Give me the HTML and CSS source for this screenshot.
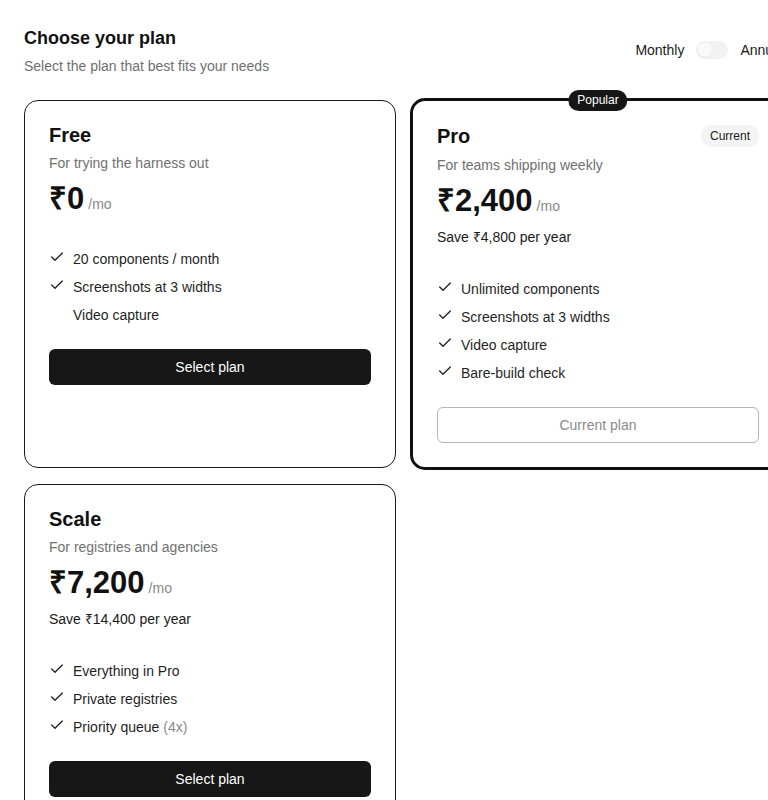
FILE: index.html
```html
<!DOCTYPE html>
<html lang="en">
<head>
<meta charset="utf-8">
<title>Choose your plan</title>
<link rel="stylesheet" href="styles.css">
</head>
<body>
<div class="page">
  <header class="head">
    <div>
      <h1 class="head-title">Choose your plan</h1>
      <p class="head-sub">Select the plan that best fits your needs</p>
    </div>
    <div class="billing">
      <span>Monthly</span>
      <span class="switch"><span class="knob"></span></span>
      <span>Annual</span>
    </div>
  </header>

  <div class="plans">
    <section class="card">
      <div class="card-top"><h2 class="plan-name">Free</h2></div>
      <p class="plan-desc">For trying the harness out</p>
      <div class="price"><span class="amount">₹0</span> <span class="per">/mo</span></div>
      <ul class="features">
        <li><svg class="check" viewBox="0 0 24 24"><polyline points="20 6 9 17 4 12"/></svg><span>20 components / month</span></li>
        <li><svg class="check" viewBox="0 0 24 24"><polyline points="20 6 9 17 4 12"/></svg><span>Screenshots at 3 widths</span></li>
        <li><span class="nocheck"></span><span>Video capture</span></li>
      </ul>
      <button class="btn btn-primary">Select plan</button>
    </section>

    <section class="card card-pro">
      <span class="popular">Popular</span>
      <div class="card-top"><h2 class="plan-name">Pro</h2><span class="current">Current</span></div>
      <p class="plan-desc">For teams shipping weekly</p>
      <div class="price"><span class="amount">₹2,400</span> <span class="per">/mo</span></div>
      <p class="save">Save ₹4,800 per year</p>
      <ul class="features">
        <li><svg class="check" viewBox="0 0 24 24"><polyline points="20 6 9 17 4 12"/></svg><span>Unlimited components</span></li>
        <li><svg class="check" viewBox="0 0 24 24"><polyline points="20 6 9 17 4 12"/></svg><span>Screenshots at 3 widths</span></li>
        <li><svg class="check" viewBox="0 0 24 24"><polyline points="20 6 9 17 4 12"/></svg><span>Video capture</span></li>
        <li><svg class="check" viewBox="0 0 24 24"><polyline points="20 6 9 17 4 12"/></svg><span>Bare-build check</span></li>
      </ul>
      <button class="btn btn-outline">Current plan</button>
    </section>

    <section class="card">
      <div class="card-top"><h2 class="plan-name">Scale</h2></div>
      <p class="plan-desc">For registries and agencies</p>
      <div class="price"><span class="amount">₹7,200</span> <span class="per">/mo</span></div>
      <p class="save">Save ₹14,400 per year</p>
      <ul class="features">
        <li><svg class="check" viewBox="0 0 24 24"><polyline points="20 6 9 17 4 12"/></svg><span>Everything in Pro</span></li>
        <li><svg class="check" viewBox="0 0 24 24"><polyline points="20 6 9 17 4 12"/></svg><span>Private registries</span></li>
        <li><svg class="check" viewBox="0 0 24 24"><polyline points="20 6 9 17 4 12"/></svg><span>Priority queue <span class="muted">(4x)</span></span></li>
      </ul>
      <button class="btn btn-primary">Select plan</button>
    </section>
  </div>
</div>
</body>
</html>
```

FILE: styles.css
```css
* { box-sizing: border-box; }

html, body {
  margin: 0;
  padding: 0;
  background: #fff;
}

body {
  font-family: "Liberation Sans", Arial, sans-serif;
  color: #111;
  overflow: hidden;
}

.page {
  width: 808px;
  padding: 24px;
}

.head {
  display: flex;
  justify-content: space-between;
  align-items: center;
}

.head-title {
  margin: 0;
  font-size: 18px;
  line-height: 28px;
  font-weight: 700;
  color: #111;
}

.head-sub {
  margin: 4px 0 0;
  font-size: 14px;
  line-height: 20px;
  color: #6f6f6f;
}

.billing {
  display: flex;
  align-items: center;
  gap: 12px;
  font-size: 14px;
  line-height: 20px;
  color: #1a1a1a;
}

.switch {
  width: 32px;
  height: 18px;
  border-radius: 9px;
  background: #f2f2f2;
  display: flex;
  align-items: center;
  padding: 2px;
}

.knob {
  width: 14px;
  height: 14px;
  border-radius: 50%;
  background: #fafafa;
  box-shadow: 0 1px 2px rgba(0,0,0,0.06);
}

.plans {
  margin-top: 24px;
  display: grid;
  grid-template-columns: 372px 372px;
  gap: 16px;
}

.card {
  position: relative;
  border: 1px solid #1a1a1a;
  border-radius: 14px;
  padding: 24px;
  display: flex;
  flex-direction: column;
  align-items: stretch;
}

.card-pro {
  border: 3px solid #111;
  margin: -2px;
  border-radius: 15px;
}

.popular {
  position: absolute;
  top: -11px;
  left: 50%;
  transform: translateX(-50%);
  background: #161616;
  color: #fff;
  font-size: 12px;
  line-height: 21px;
  padding: 0 9px;
  border-radius: 11px;
}

.card-top {
  display: flex;
  justify-content: space-between;
  align-items: center;
}

.plan-name {
  margin: 0;
  font-size: 20px;
  line-height: 20px;
  font-weight: 700;
  color: #111;
}

.current {
  background: #f4f4f4;
  color: #222;
  font-size: 12px;
  line-height: 22px;
  padding: 0 9px;
  border-radius: 11px;
}

.plan-desc {
  margin: 8px 0 0;
  font-size: 14px;
  line-height: 20px;
  color: #707070;
}

.price {
  margin-top: 8px;
  line-height: 36px;
  display: flex;
  align-items: baseline;
  gap: 4px;
}

.amount {
  font-size: 31px;
  font-weight: 700;
  color: #111;
}

.per {
  font-size: 14px;
  color: #888;
}

.save {
  margin: 3px 0 5px;
  font-size: 14px;
  line-height: 20px;
  color: #1a1a1a;
}

.features {
  list-style: none;
  margin: 27px 0 0;
  padding: 0;
  display: flex;
  flex-direction: column;
  gap: 8px;
}

.features li {
  display: flex;
  align-items: center;
  gap: 8px;
  font-size: 14px;
  line-height: 20px;
  color: #1f1f1f;
}

.check {
  width: 16px;
  height: 16px;
  flex: none;
  fill: none;
  stroke: #222;
  stroke-width: 2;
  stroke-linecap: round;
  stroke-linejoin: round;
  position: relative;
  top: -2px;
}

.nocheck {
  width: 16px;
  height: 16px;
  flex: none;
}

.muted {
  color: #888;
}

.btn {
  margin-top: 24px;
  height: 36px;
  border-radius: 6px;
  font-family: inherit;
  font-size: 14px;
  width: 100%;
  cursor: pointer;
}

.btn-primary {
  background: #171717;
  color: #fff;
  border: none;
}

.btn-outline {
  background: #fff;
  color: #8a8a8a;
  border: 1px solid #b5b5b5;
}
```
